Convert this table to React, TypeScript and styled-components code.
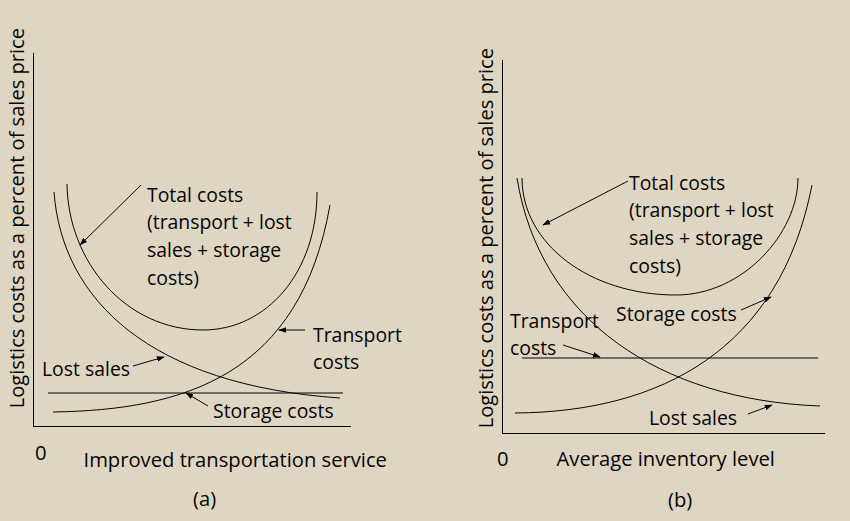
import styled, { createGlobalStyle } from 'styled-components'

const INK = '#050505'
const PAPER = '#dfd5c3'
const FONT = "'Open Sans', Lato, sans-serif"

const GlobalStyle = createGlobalStyle`
  html, body {
    margin: 0;
    padding: 0;
    background: ${PAPER};
  }
  body {
    font-family: ${FONT};
    font-weight: 500;
    color: ${INK};
  }
`

const Page = styled.main`
  width: 850px;
  height: 521px;
  display: flex;
  overflow: hidden;
  background: ${PAPER};
`

const Figure = styled.figure<{ $width: number; $top: number; $left: number; $plotW: number }>`
  margin: 0;
  box-sizing: border-box;
  width: ${p => p.$width}px;
  padding: ${p => p.$top}px 0 0 ${p => p.$left}px;
  display: grid;
  grid-template-columns: 28px ${p => p.$plotW}px;
  grid-template-rows: 374px auto auto;
  align-content: start;
`

const YLabel = styled.div<{ $lift: number }>`
  grid-column: 1;
  grid-row: 1;
  align-self: start;
  justify-self: start;
  margin-top: ${p => -p.$lift}px;
  writing-mode: vertical-rl;
  transform: rotate(180deg);
  white-space: nowrap;
  font-size: 20.1px;
  line-height: 24px;
`

const Plot = styled.div`
  grid-column: 2;
  grid-row: 1;
  border-left: 1px solid ${INK};
  border-bottom: 1px solid ${INK};
`

const Chart = styled.svg`
  display: block;
  width: 100%;
  height: 100%;
  overflow: visible;
  font-family: ${FONT};
  font-weight: 500;
  font-size: 19.4px;

  path,
  line {
    fill: none;
    stroke: ${INK};
    stroke-width: 1;
  }
  text {
    fill: ${INK};
  }
`

const XAxis = styled.div<{ $indent: number; $gap: number }>`
  grid-column: 1 / -1;
  display: flex;
  align-items: flex-start;
  gap: ${p => p.$gap}px;
  padding-left: ${p => p.$indent}px;
  font-size: 20.2px;
  line-height: 24px;
  white-space: nowrap;
`

const AxisText = styled.span<{ $drop: number }>`
  margin-top: ${p => p.$drop}px;
`

const Caption = styled.figcaption<{ $indent: number; $drop: number }>`
  grid-column: 1 / -1;
  padding-left: ${p => p.$indent}px;
  margin-top: ${p => p.$drop}px;
  font-size: 20.2px;
  line-height: 24px;
`

type Label = { x: number; y: number; lines: string[] }
type Arrow = [number, number, number, number]

interface ChartSpec {
  id: string
  box: [number, number, number, number]
  curves: string[]
  arrows: Arrow[]
  labels: Label[]
}

const LINE_STEP = 27.7

function PlotChart({ spec }: { spec: ChartSpec }) {
  const [x, y, w, h] = spec.box
  const marker = `head-${spec.id}`
  return (
    <Chart viewBox={`${x} ${y} ${w} ${h}`} preserveAspectRatio="none">
      <defs>
        <marker
          id={marker}
          viewBox="0 0 10 10"
          refX="9"
          refY="5"
          markerWidth="8"
          markerHeight="8"
          orient="auto"
          markerUnits="userSpaceOnUse"
        >
          <path d="M0,1.5 L10,5 L0,8.5 z" style={{ fill: INK, stroke: 'none' }} />
        </marker>
      </defs>
      {spec.curves.map(d => (
        <path key={d} d={d} />
      ))}
      {spec.arrows.map(([x1, y1, x2, y2]) => (
        <line key={`${x1}-${y1}`} x1={x1} y1={y1} x2={x2} y2={y2} markerEnd={`url(#${marker})`} />
      ))}
      {spec.labels.map(label =>
        label.lines.map((line, i) => (
          <text key={line} x={label.x} y={label.y + i * LINE_STEP} dominantBaseline="central">
            {line}
          </text>
        ))
      )}
    </Chart>
  )
}

// (a) improved transportation service
const chartA: ChartSpec = {
  id: 'a',
  box: [34, 53, 317, 373],
  curves: [
    'M67,184 C68,262 126,330 203,330 C267,330 317,272 317,192',
    'M54,192 C62,300 150,385 340,398',
    'M53,412 C185,410 300,375 330,205',
    'M48,393 L343,393',
  ],
  arrows: [
    [141, 185, 80, 245],
    [305, 330, 279, 330],
    [133, 366, 164, 357],
    [208, 406, 186, 393],
  ],
  labels: [
    { x: 147, y: 194, lines: ['Total costs', '(transport + lost', 'sales + storage', 'costs)'] },
    { x: 313, y: 334, lines: ['Transport', 'costs'] },
    { x: 42, y: 368, lines: ['Lost sales'] },
    { x: 213, y: 410, lines: ['Storage costs'] },
  ],
}

// (b) average inventory level
const chartB: ChartSpec = {
  id: 'b',
  box: [503, 60, 322, 373],
  curves: [
    'M522,178 C522,244 590,295 676,295 C743,295 798,233 798,178',
    'M517,178 C540,320 660,400 820,406',
    'M515,413 C660,412 780,350 812,185',
    'M522,358 L818,358',
  ],
  arrows: [
    [628, 181, 543, 225],
    [741, 310, 771, 297],
    [563, 345, 600, 357],
    [748, 414, 772, 405],
  ],
  labels: [
    { x: 629, y: 182, lines: ['Total costs', '(transport + lost', 'sales + storage', 'costs)'] },
    { x: 616, y: 313, lines: ['Storage costs'] },
    { x: 510, y: 320, lines: ['Transport', 'costs'] },
    { x: 649, y: 417, lines: ['Lost sales'] },
  ],
}

export default function App() {
  return (
    <>
      <GlobalStyle />
      <Page>
        <Figure $width={425} $top={53} $left={5} $plotW={318}>
          <YLabel $lift={25}>Logistics costs as a percent of sales price</YLabel>
          <Plot>
            <PlotChart spec={chartA} />
          </Plot>
          <XAxis $indent={30} $gap={37}>
            <AxisText $drop={13}>0</AxisText>
            <AxisText $drop={20}>Improved transportation service</AxisText>
          </XAxis>
          <Caption $indent={188} $drop={15}>(a)</Caption>
        </Figure>
        <Figure $width={425} $top={60} $left={49} $plotW={323}>
          <YLabel $lift={12}>Logistics costs as a percent of sales price</YLabel>
          <Plot>
            <PlotChart spec={chartB} />
          </Plot>
          <XAxis $indent={23} $gap={48}>
            <AxisText $drop={12}>0</AxisText>
            <AxisText $drop={12}>Average inventory level</AxisText>
          </XAxis>
          <Caption $indent={194} $drop={17}>(b)</Caption>
        </Figure>
      </Page>
    </>
  )
}
